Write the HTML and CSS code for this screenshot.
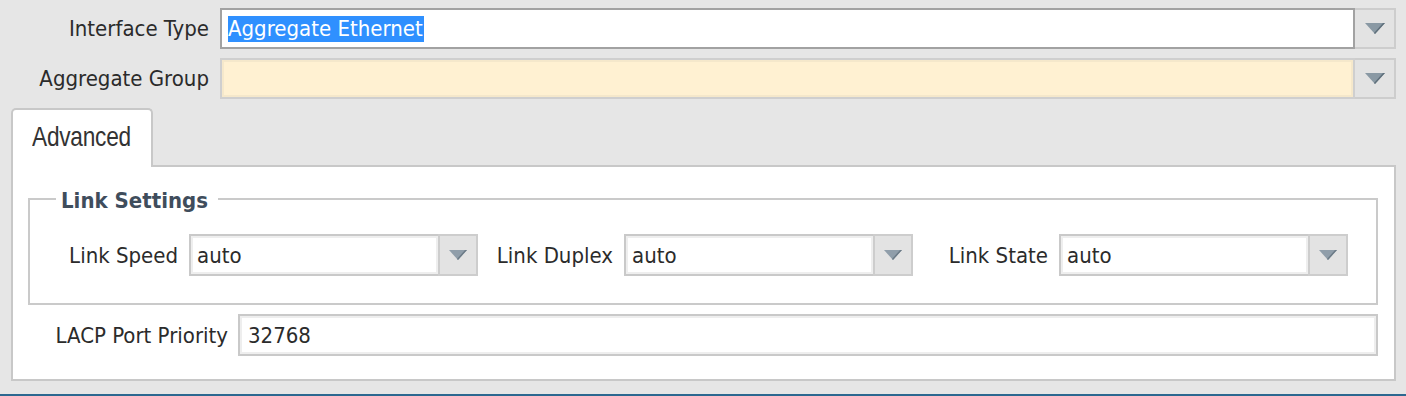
FILE: index.html
```html
<!DOCTYPE html>
<html>
<head>
<meta charset="utf-8">
<link rel="stylesheet" href="styles.css">
</head>
<body>
<div class="page">
  <div class="row">
    <label class="label">Interface Type</label>
    <div class="combo combo-focus">
      <div class="value"><span class="sel">Aggregate Ethernet</span></div>
      <div class="btn"><svg width="20" height="11" viewBox="0 0 20 11"><polygon points="0,0 20,0 10,11" fill="#8a99a4"/><polygon points="20,0 10,11 9,10 18,0" fill="#5f6f7b"/></svg></div>
    </div>
  </div>
  <div class="row row2">
    <label class="label">Aggregate Group</label>
    <div class="combo combo-req">
      <div class="value"></div>
      <div class="btn"><svg width="20" height="11" viewBox="0 0 20 11"><polygon points="0,0 20,0 10,11" fill="#8a99a4"/><polygon points="20,0 10,11 9,10 18,0" fill="#5f6f7b"/></svg></div>
    </div>
  </div>

  <div class="tabs">
    <div class="tab"><span class="tab-text">Advanced</span></div>
  </div>
  <div class="panel">
    <fieldset class="group">
      <legend class="legend">Link Settings</legend>
      <div class="fields">
        <div class="field">
          <label class="flabel">Link Speed</label>
          <div class="combo combo-sm">
            <div class="value">auto</div>
            <div class="btn"><svg width="18" height="10" viewBox="0 0 18 10"><polygon points="0,0 18,0 9,10" fill="#909eaa"/><polygon points="18,0 9,10 8,9 16,0" fill="#6c7b87"/></svg></div>
          </div>
        </div>
        <div class="field">
          <label class="flabel">Link Duplex</label>
          <div class="combo combo-sm">
            <div class="value">auto</div>
            <div class="btn"><svg width="18" height="10" viewBox="0 0 18 10"><polygon points="0,0 18,0 9,10" fill="#909eaa"/><polygon points="18,0 9,10 8,9 16,0" fill="#6c7b87"/></svg></div>
          </div>
        </div>
        <div class="field">
          <label class="flabel">Link State</label>
          <div class="combo combo-sm">
            <div class="value">auto</div>
            <div class="btn"><svg width="18" height="10" viewBox="0 0 18 10"><polygon points="0,0 18,0 9,10" fill="#909eaa"/><polygon points="18,0 9,10 8,9 16,0" fill="#6c7b87"/></svg></div>
          </div>
        </div>
      </div>
    </fieldset>
    <div class="lacp">
      <label class="llabel">LACP Port Priority</label>
      <div class="text-input">32768</div>
    </div>
  </div>
  <div class="footer-bar"></div>
</div>
</body>
</html>
```
FILE: styles.css
```css
html, body {
  margin: 0;
  padding: 0;
}
body {
  background: #e6e6e6;
  font-family: "DejaVu Sans Condensed", "DejaVu Sans", sans-serif;
  font-size: 22px;
  color: #2b2b2b;
  width: 1406px;
  height: 396px;
  overflow: hidden;
}
.page {
  padding-top: 8px;
}
.row {
  display: flex;
  align-items: center;
  height: 41px;
  margin-right: 10px;
}
.row2 {
  margin-top: 9px;
}
.label {
  width: 209px;
  text-align: right;
  margin-right: 11px;
  white-space: nowrap;
}
.combo {
  flex: 1;
  display: flex;
  height: 100%;
  box-sizing: border-box;
}
.combo .value {
  flex: 1;
  box-sizing: border-box;
  border: 2px solid #c9c9c9;
  box-shadow: inset 0 0 0 2px #eeeeee;
  background: #ffffff;
  display: flex;
  align-items: center;
  padding-left: 6px;
  white-space: nowrap;
}
.combo .btn {
  width: 41px;
  box-sizing: border-box;
  border: 2px solid #cdcdcd;
  border-left: none;
  background: #e3e3e3;
  display: flex;
  align-items: center;
  justify-content: center;
}
.combo-focus .value {
  border-color: #a2a2a2;
  box-shadow: none;
}
.combo-req .value {
  background: #fff1d2;
  border-color: #cfcfcf;
  box-shadow: inset 0 0 0 2px #f5e8cb;
}
.sel {
  background: #2f90ff;
  color: #ffffff;
  line-height: 26px;
  padding-right: 1px;
}
.tabs {
  display: flex;
  margin-top: 9px;
  padding-left: 11px;
  height: 57px;
}
.tab {
  position: relative;
  z-index: 1;
  width: 142px;
  height: 59px;
  box-sizing: border-box;
  border: 2px solid #c8c8c8;
  border-bottom: none;
  border-radius: 5px 5px 0 0;
  background: #ffffff;
  font-family: "Liberation Sans", "Arial", sans-serif;
  font-size: 28px;
  color: #333333;
  padding-left: 19px;
  padding-top: 11px;
}
.tab-text {
  display: inline-block;
  transform: scaleX(0.81);
  transform-origin: left center;
  letter-spacing: -0.3px;
}
.panel {
  margin-left: 11px;
  margin-right: 10px;
  height: 216px;
  box-sizing: border-box;
  border: 2px solid #c8c8c8;
  background: #ffffff;
  padding: 20px 16px 0 15px;
}
.group {
  margin: 0;
  padding: 0 0 0 13px;
  border: 2px solid #cacaca;
  height: 118px;
  box-sizing: border-box;
}
.legend {
  margin-left: 13px;
  padding: 0 10px 0 5px;
  font-weight: bold;
  color: #3f4d5c;
  line-height: 24px;
  position: relative;
  top: 2px;
}
.fields {
  display: flex;
  margin-top: 23px;
}
.field {
  display: flex;
  align-items: center;
  width: 435px;
  height: 42px;
}
.flabel {
  flex: 1;
  text-align: right;
  margin-right: 11px;
  white-space: nowrap;
}
.combo-sm {
  flex: 0 0 289px;
}
.combo-sm .btn {
  width: 40px;
  border-left: 2px solid #cdcdcd;
  margin-left: -2px;
}
.lacp {
  display: flex;
  align-items: center;
  margin-top: 9px;
  height: 42px;
}
.llabel {
  width: 200px;
  text-align: right;
  margin-right: 10px;
  white-space: nowrap;
}
.text-input {
  flex: 1;
  height: 100%;
  box-sizing: border-box;
  border: 2px solid #c9c9c9;
  box-shadow: inset 0 0 0 2px #eeeeee;
  display: flex;
  align-items: center;
  padding-left: 8px;
}
.footer-bar {
  margin-top: 13px;
  height: 2px;
  background: #2c6890;
}
```
